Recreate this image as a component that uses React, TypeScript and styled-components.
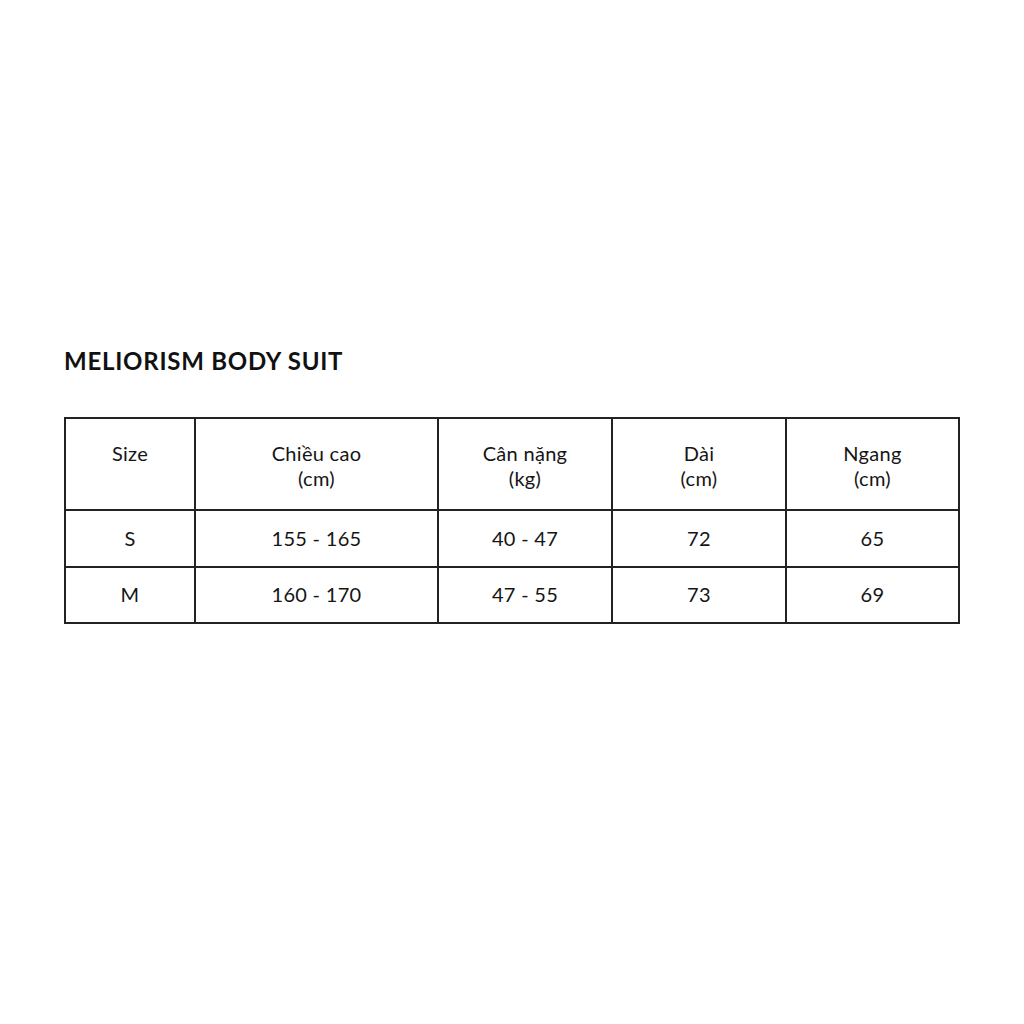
import styled, { createGlobalStyle } from 'styled-components'

const GlobalStyle = createGlobalStyle`
  html, body {
    margin: 0;
    padding: 0;
    background: #ffffff;
  }
  body {
    font-family: 'Lato', 'Liberation Sans', sans-serif;
    color: #111111;
  }
`

const Page = styled.div`
  width: 1024px;
  height: 1024px;
  box-sizing: border-box;
  padding: 347px 0 0 64px;
`

const Title = styled.h1`
  margin: 0 0 42px 0;
  font-size: 24px;
  line-height: 28px;
  font-weight: 700;
  letter-spacing: 0.75px;
  color: #111111;
`

const Table = styled.table`
  width: 894px;
  border-collapse: collapse;
  table-layout: fixed;
  border: 2px solid #222222;
`

const Cell = styled.td<{ $head?: boolean }>`
  border: 2px solid #222222;
  text-align: center;
  vertical-align: ${(p) => (p.$head ? 'top' : 'middle')};
  padding: ${(p) => (p.$head ? '22px 0 0 0' : '0')};
  height: ${(p) => (p.$head ? '68px' : '54.5px')};
  font-size: 20px;
  line-height: 25px;
  font-weight: 400;
  letter-spacing: 0.3px;
  color: #151515;
`

const widths = [130, 243, 174, 174, 173]

const head = [
  ['Size'],
  ['Chiều cao', '(cm)'],
  ['Cân nặng', '(kg)'],
  ['Dài', '(cm)'],
  ['Ngang', '(cm)'],
]

const rows = [
  ['S', '155 - 165', '40 - 47', '72', '65'],
  ['M', '160 - 170', '47 - 55', '73', '69'],
]

export default function App() {
  return (
    <>
      <GlobalStyle />
      <Page>
        <Title>MELIORISM BODY SUIT</Title>
        <Table>
          <colgroup>
            {widths.map((w, i) => (
              <col key={i} style={{ width: w }} />
            ))}
          </colgroup>
          <tbody>
            <tr>
              {head.map((lines, i) => (
                <Cell $head key={i}>
                  {lines.map((l, j) => (
                    <div key={j}>{l}</div>
                  ))}
                </Cell>
              ))}
            </tr>
            {rows.map((r, i) => (
              <tr key={i}>
                {r.map((v, j) => (
                  <Cell key={j}>{v}</Cell>
                ))}
              </tr>
            ))}
          </tbody>
        </Table>
      </Page>
    </>
  )
}
